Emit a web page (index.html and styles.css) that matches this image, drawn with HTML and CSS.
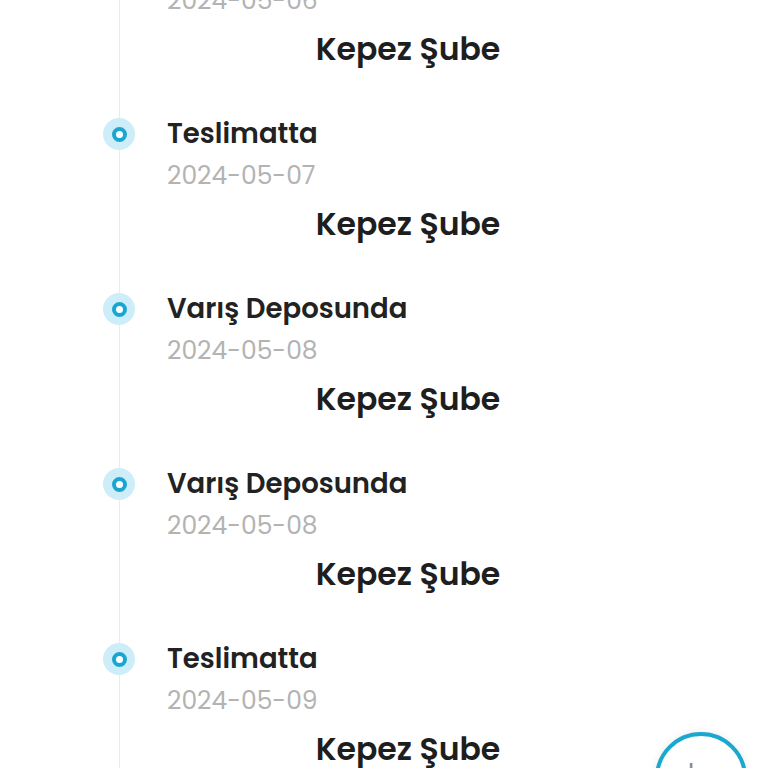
FILE: index.html
```html
<!DOCTYPE html>
<html lang="tr">
<head>
<meta charset="utf-8">
<link rel="stylesheet" href="styles.css">
</head>
<body>
<div class="page">
  <div class="timeline">
    <div class="item">
      <span class="dot"></span>
      <div class="title">Teslimatta</div>
      <div class="date">2024-05-06</div>
      <div class="branch">Kepez Şube</div>
    </div>
    <div class="item">
      <span class="dot"></span>
      <div class="title">Teslimatta</div>
      <div class="date">2024-05-07</div>
      <div class="branch">Kepez Şube</div>
    </div>
    <div class="item">
      <span class="dot"></span>
      <div class="title">Varış Deposunda</div>
      <div class="date">2024-05-08</div>
      <div class="branch">Kepez Şube</div>
    </div>
    <div class="item">
      <span class="dot"></span>
      <div class="title">Varış Deposunda</div>
      <div class="date">2024-05-08</div>
      <div class="branch">Kepez Şube</div>
    </div>
    <div class="item">
      <span class="dot"></span>
      <div class="title">Teslimatta</div>
      <div class="date">2024-05-09</div>
      <div class="branch">Kepez Şube</div>
    </div>
  </div>
  <button class="fab"><span class="plus">+</span></button>
</div>
</body>
</html>
```
FILE: styles.css
```css
html, body {
  margin: 0;
  padding: 0;
  background: #ffffff;
}
.page {
  position: relative;
  width: 768px;
  height: 768px;
  overflow: hidden;
  font-family: "Poppins", "Inter", "Open Sans", sans-serif;
}
.timeline {
  position: relative;
  margin-top: -61px;
  margin-left: 119px;
  padding-left: 47px;
  width: 482px;
  border-left: 1px solid #ebebeb;
  min-height: 900px;
}
.item {
  position: relative;
  height: 175px;
}
.dot {
  position: absolute;
  left: -64px;
  top: 4px;
  width: 32px;
  height: 32px;
  border-radius: 50%;
  background: #cdeef8;
  display: flex;
  align-items: center;
  justify-content: center;
}
.dot::after {
  content: "";
  width: 7px;
  height: 7px;
  border-radius: 50%;
  border: 4.5px solid #1ba6d1;
  background: #ffffff;
}
.title {
  height: 40px;
  line-height: 40px;
  font-size: 27.5px;
  font-weight: 600;
  color: #222222;
}
.date {
  height: 44px;
  line-height: 44px;
  font-size: 25px;
  color: #b3b3b3;
}
.branch {
  height: 52px;
  line-height: 52px;
  font-size: 31.5px;
  font-weight: 600;
  color: #1e1e1e;
  text-align: center;
}
.fab {
  position: absolute;
  left: 655px;
  top: 732px;
  width: 92px;
  height: 92px;
  border-radius: 50%;
  border: 4px solid #1aa8cf;
  background: #ffffff;
  box-shadow: 0 0 10px rgba(0,0,0,0.08);
  padding: 0;
  display: flex;
  justify-content: center;
  align-items: center;
}
.plus {
  font-family: "DejaVu Sans", sans-serif;
  font-size: 30px;
  color: #8a8a8a;
  margin-left: -20px;
  margin-top: -14px;
}
```
